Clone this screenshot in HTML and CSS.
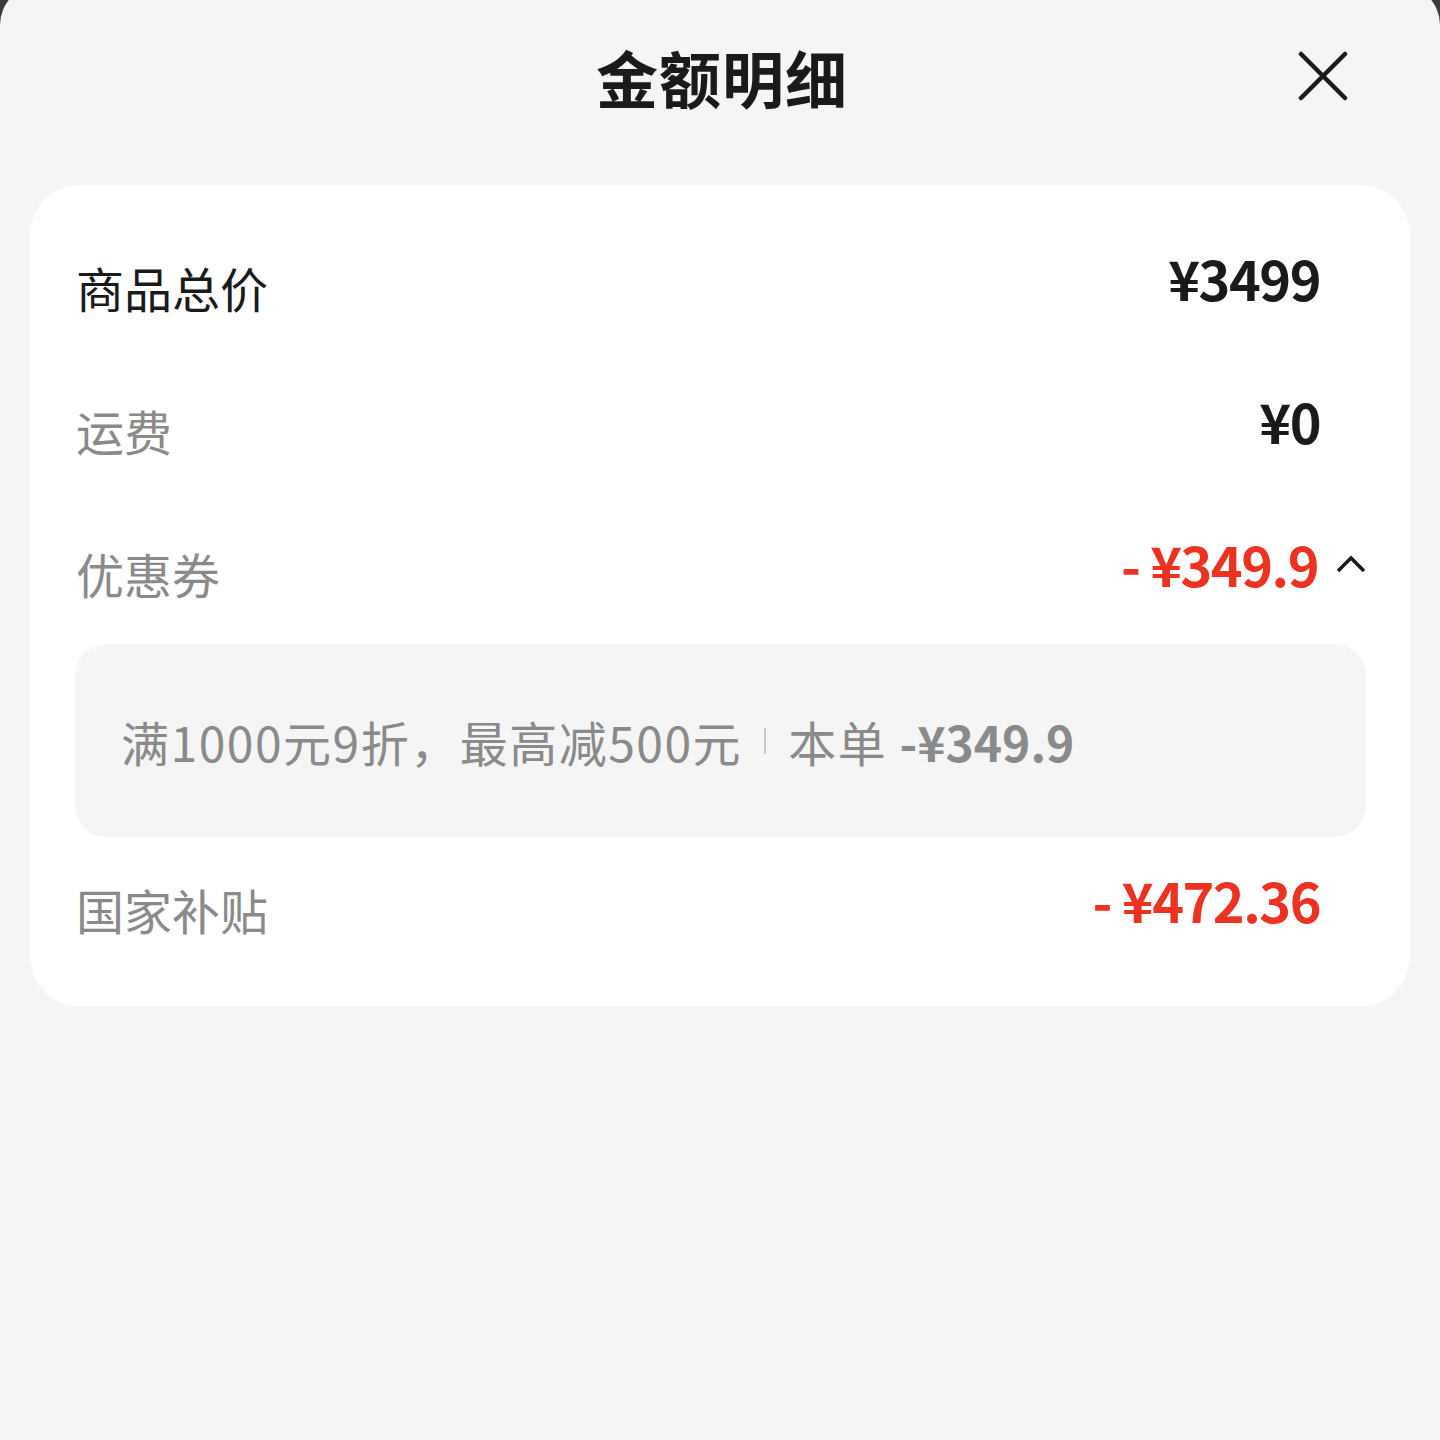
FILE: index.html
```html
<!DOCTYPE html>
<html lang="zh-CN">
<head>
    <meta charset="UTF-8">
    <meta name="viewport" content="width=device-width, initial-scale=1.0">
    <title>金额明细</title>
    <link rel="stylesheet" href="styles.css">
</head>
<body>

<div class="sheet">
    <div class="sheet-header">
        <h1 class="sheet-title">金额明细</h1>
        <button class="close-button" aria-label="关闭">
            <svg width="50" height="50" viewBox="0 0 50 50">
                <path d="M3 3 L47 47 M47 3 L3 47" stroke="#1a1a1a" stroke-width="4.5" stroke-linecap="round" fill="none"/>
            </svg>
        </button>
    </div>

    <div class="detail-card">
        <div class="detail-row">
            <span class="row-label dark">商品总价</span>
            <span class="row-value">¥3499</span>
        </div>
        <div class="detail-row">
            <span class="row-label">运费</span>
            <span class="row-value">¥0</span>
        </div>
        <div class="detail-row">
            <span class="row-label">优惠券</span>
            <span class="row-value red with-arrow">- ¥349.9
                <svg class="arrow" width="30" height="20" viewBox="0 0 30 20">
                    <path d="M2 17 L15 4 L28 17" stroke="#1a1a1a" stroke-width="3.5" fill="none"/>
                </svg>
            </span>
        </div>
        <div class="coupon-box">
            <span>满1000元9折，最高减500元</span>
            <span class="divider"></span>
            <span>本单 <span class="coupon-amount">-¥349.9</span></span>
        </div>
        <div class="detail-row">
            <span class="row-label">国家补贴</span>
            <span class="row-value red">- ¥472.36</span>
        </div>
    </div>
</div>

</body>
</html>
```

FILE: styles.css
```css
body {
    margin: 0;
    padding: 0;
    background-color: #3c3c3c;
    font-family: "Noto Sans CJK SC", "Noto Sans", sans-serif;
    overflow: hidden;
}
.sheet {
    margin-top: -15px;
    min-height: 1460px;
    background-color: #f5f5f5;
    border-radius: 40px 40px 0 0;
    padding: 0 30px;
}
.sheet-header {
    height: 184px;
    padding-bottom: 16px;
    display: flex;
    justify-content: center;
    align-items: center;
    position: relative;
}
.sheet-title {
    margin: 0;
    font-size: 62px;
    font-weight: 700;
    color: #1a1a1a;
    letter-spacing: 1px;
    padding-left: 4px;
}
.close-button {
    position: absolute;
    right: 62px;
    top: 66px;
    background: none;
    border: none;
    padding: 0;
    width: 50px;
    height: 50px;
    cursor: pointer;
}
.close-button svg {
    display: block;
}
.detail-card {
    background-color: #fff;
    border-radius: 50px;
    padding: 30px 44px 26px 46px;
}
.detail-row {
    height: 143px;
    display: flex;
    justify-content: space-between;
    align-items: center;
}
.row-label {
    font-size: 48px;
    color: #8a8a8a;
}
.row-label.dark {
    color: #1a1a1a;
}
.row-value {
    font-size: 54px;
    font-weight: 700;
    letter-spacing: -1.5px;
    color: #1a1a1a;
    margin-right: 46px;
    display: flex;
    align-items: center;
    padding-bottom: 18px;
}
.row-value.red {
    color: #ec3322;
}
.row-value.with-arrow {
    margin-right: 0;
}
.row-value .arrow {
    margin-left: 18px;
}
.coupon-box {
    background-color: #f5f5f5;
    border-radius: 32px;
    height: 193px;
    display: flex;
    align-items: center;
    padding-left: 46px;
    margin-left: -1px;
    font-size: 48px;
    letter-spacing: 1.5px;
    color: #8a8a8a;
}
.coupon-amount {
    font-weight: 700;
    letter-spacing: 0;
}
.divider {
    width: 2px;
    height: 26px;
    background-color: #c8c8c8;
    margin: 0 22px;
}
```
